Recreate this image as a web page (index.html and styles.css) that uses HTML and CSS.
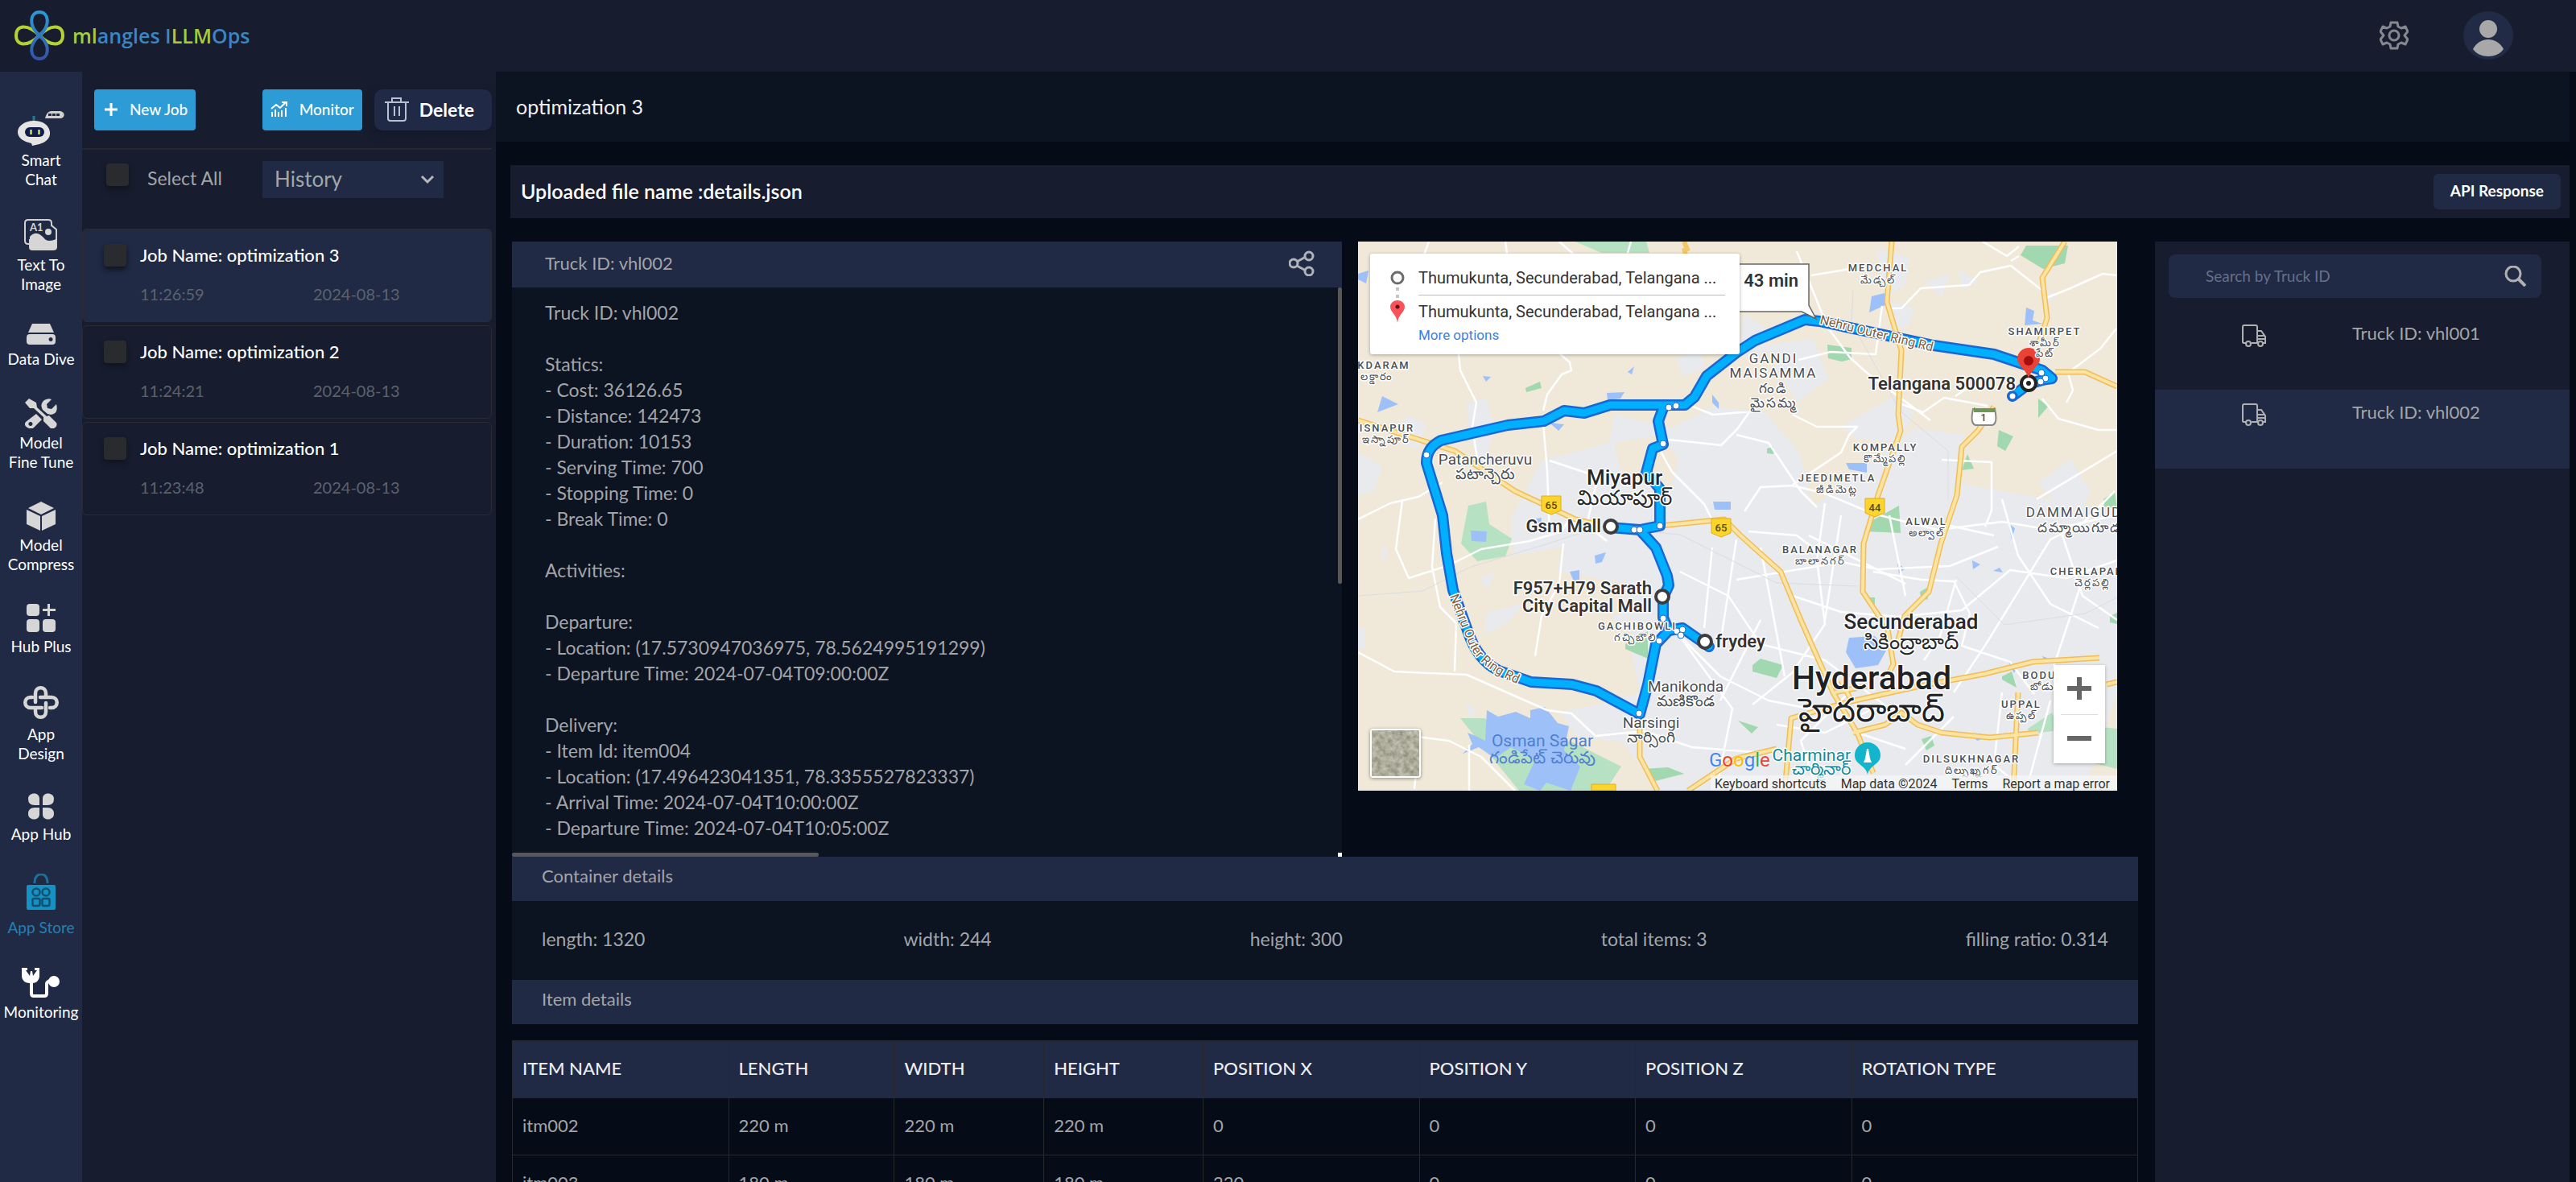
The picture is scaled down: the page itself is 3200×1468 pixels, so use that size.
FILE: index.html
```html
<!DOCTYPE html>
<html lang="en">
  <head>
    <meta charset="UTF-8" />
    <meta name="viewport" content="width=device-width, initial-scale=1.0" />
    <title>mlangles LLMOps - App Store</title>
    <link rel="stylesheet" href="styles.css">
  </head>
  <body>
    <header class="topbar">
      <a class="brand" href="#">
        <svg width="62" height="62" viewBox="0 0 62 62" fill="none" stroke-width="4">
          <defs>
            <linearGradient id="petal" x1="0" y1="0" x2="0" y2="1">
              <stop offset="0" stop-color="#2b9bd8" />
              <stop offset="1" stop-color="#3553a8" />
            </linearGradient>
          </defs>
          <path d="M31 31C16 16 2 18 2 31S16 46 31 31C46 16 60 18 60 31S46 46 31 31z" stroke="#b2d235" />
          <path d="M31 31C16 18 20 2 31 2S46 18 31 31C16 44 20 60 31 60S46 44 31 31z" stroke="url(#petal)" />
        </svg>
        <span class="brand-name"><b>ml</b>angles I<b>LLM</b>Ops</span>
      </a>
      <div class="topbar-actions">
        <button class="icon-btn" aria-label="Settings">
          <svg width="36" height="36" viewBox="0 0 36 36" fill="none" stroke="#85888f" stroke-width="3">
            <path d="M14 2h8l1 5 4 2 5-2 3 6-4 5 4 5-3 6-5-2-4 2-1 5h-8l-1-5-4-2-5 2-3-6 4-5-4-5 3-6 5 2 4-2z" stroke-linejoin="round" />
            <circle cx="18" cy="18" r="6" />
          </svg>
        </button>
        <button class="icon-btn avatar" aria-label="Account">
          <svg width="62" height="60" viewBox="0 0 62 60">
            <ellipse cx="31" cy="30" rx="31" ry="30" fill="#212b45" />
            <circle cx="31" cy="22" r="11" fill="#a8a8a8" />
            <path d="M12 47c8-16 30-16 38 0c-8 12-30 12-38 0z" fill="#a8a8a8" />
          </svg>
        </button>
      </div>
    </header>

    <div class="shell">
      <nav class="rail">
        <a href="#">
          <svg width="60" height="44" viewBox="0 0 60 44">
            <path d="M35 10c2-7 4-9 9-9h9c7 0 8 9 0 9z" fill="#d0d0d0" />
            <path d="M39 4h4v3h-4zM44 4h4v3h-4zM49 4h4v3h-4z" fill="#1d2746" />
            <path d="M21 7v7" stroke="#1c7d93" stroke-width="3" />
            <path d="M21 13c12 0 19 6 20 14s-6 13-13 15l-9 2-1-3C8 39 1 34 1 27s8-14 20-14z" fill="#e4e4e4" />
            <rect x="10" y="21" width="24" height="12" rx="6" fill="#131b48" />
            <path d="M16 24h3v6h-3zM26 24h3v6h-3z" fill="#a9c94a" />
          </svg>
          <span>Smart<br />Chat</span>
        </a>
        <a href="#">
          <svg width="42" height="39" viewBox="0 0 42 39">
            <path d="M8 31H5c-3 0-4-1-4-4V5c0-3 1-4 4-4h25c3 0 4 1 4 4v3l6 5v22c0 2-1 3-4 3H10c-2 0-3-1-3-3V25" fill="none" stroke="#d0d0d0" stroke-width="2" />
            <path d="M7 36V22c7-8 13-3 17 1c5 6 9 4 16 2v10c0 2-1 3-4 3H10c-2 0-3-1-3-2z" fill="#d6d6d6" />
            <circle cx="30" cy="16" r="4" fill="#d6d6d6" />
            <text x="7" y="15" class="ai-mark">A1</text>
          </svg>
          <span>Text To<br />Image</span>
        </a>
        <a href="#">
          <svg width="36" height="26" viewBox="0 0 36 26" fill="#d6d6d6">
            <path d="M7 0h22l5 11H2z" />
            <path fill-rule="evenodd" d="M4 13h28q4 0 4 4v5q0 4-4 4H4q-4 0-4-4v-5q0-4 4-4zM30 17a2.500 2.500 0 1 0 .1 0z" />
          </svg>
          Data Dive
        </a>
        <a href="#">
          <svg width="40" height="37" viewBox="0 0 40 37" fill="#d6d6d6">
            <path d="M0 5 5 0l9 5 1 6 12 11 3-1 9 9q2 4-3 7l-4 0-9-9 0-5L11 12H6z" />
            <path fill-rule="evenodd" d="M14 19 1 29q-3 4 2 7t8 0l10-10zM7 29a2.500 2.500 0 1 1-.1 0z" />
            <path d="M22 14q-4-7 2-12 5-3 9-1l-6 6 1 5 5 1 6-6q3 12-7 13l-4-1z" />
          </svg>
          <span>Model<br />Fine Tune</span>
        </a>
        <a href="#">
          <svg width="36" height="36" viewBox="0 0 36 36" fill="#d6d6d6">
            <path d="M18 0 34 8 18 16 2 8zM0 10l17 8v18L0 28zM36 10l-17 8v18l17-8z" />
          </svg>
          <span>Model<br />Compress</span>
        </a>
        <a href="#">
          <svg width="36" height="35" viewBox="0 0 36 35" fill="#d6d6d6">
            <rect width="16" height="15" rx="4" />
            <rect y="19" width="16" height="16" rx="4" />
            <rect x="20" y="19" width="16" height="16" rx="4" />
            <path d="M26 0h3v6h7v3h-7v6h-3V9h-6V6h6z" />
          </svg>
          Hub Plus
        </a>
        <a href="#">
          <svg width="44" height="42" viewBox="0 0 44 42" fill="none" stroke="#d6d6d6" stroke-width="4.500" stroke-linecap="round">
            <path d="M15 20V9c0-9 13-9 13 0v3M11 14H9c-9 0-9 13 0 13h14M28 21v11c0 9-13 9-13 0v-2M33 27h2c9 0 9-13 0-13H21" />
          </svg>
          <span>App<br />Design</span>
        </a>
        <a href="#">
          <svg width="32" height="33" viewBox="0 0 32 33" fill="#d6d6d6">
            <path d="M14 15V6C13-2 0-1 0 7q0 8 8 8zM18 15V6c1-8 14-7 14 1q0 8-8 8zM14 18v9c-1 8-14 7-14-1q0-8 8-8zM18 18v9c1 8 14 7 14-1q0-8-8-8z" />
          </svg>
          App Hub
        </a>
        <a href="#" class="active">
          <svg width="36" height="45" viewBox="0 0 36 45">
            <path d="M10 12C9-3 27-3 26 12" fill="none" stroke="#1b6f99" stroke-width="3" />
            <rect y="14" width="36" height="31" rx="2" fill="#1591c4" />
            <g fill="none" stroke="#12506f" stroke-width="2.500">
              <circle cx="12" cy="23" r="4.500" /><circle cx="24" cy="23" r="4.500" />
              <rect x="7.500" y="31" width="9" height="9" rx="2" /><rect x="19.500" y="31" width="9" height="9" rx="2" />
            </g>
          </svg>
          App Store
        </a>
        <a href="#">
          <svg width="48" height="38" viewBox="0 0 48 38">
            <path d="M0 1h7v3H5l5 7 1-6h2l1 6 5-7h-3V1h6v11q-1 7-8 8h-5Q1 19 0 12z" fill="#fff" />
            <path d="M12 18v15q0 3 3 3h13q3 0 3-3V21q0-3 5-4" fill="none" stroke="#fff" stroke-width="4" />
            <circle cx="40" cy="18" r="7" fill="#fff" />
          </svg>
          Monitoring
        </a>
      </nav>

      <aside class="jobs">
        <div class="jobs-toolbar">
          <button class="btn btn-primary">
            <svg width="16" height="16" viewBox="0 0 16 16"><path d="M8 0v16M0 8h16" stroke="#fff" stroke-width="3" /></svg>
            New Job
          </button>
          <button class="btn btn-primary monitor">
            <svg width="21" height="19" viewBox="0 0 21 19" fill="none" stroke="#fff" stroke-width="2">
              <path d="M1 9 7 4l5 4 7-7M14 1h6v5M2 19v-6M6 19v-9M10 19v-6M14 19v-8M19 19V8" />
            </svg>
            Monitor
          </button>
          <button class="btn btn-delete">
            <svg width="30" height="31" viewBox="0 0 30 31" fill="none" stroke="#b9c0d0" stroke-width="2">
              <path d="M0 7h30M9 7V2h11v5M4 7v20q0 3 3 3h16q3 0 3-3V7M12 12v12M18 12v12" />
            </svg>
            Delete
          </button>
        </div>
        <div class="jobs-filter">
          <input type="checkbox" class="tick" id="select-all" />
          <label for="select-all">Select All</label>
          <div class="select-wrap">
            <select aria-label="Job list">
              <option>History</option>
            </select>
            <svg width="18" height="12" viewBox="0 0 18 12"><path d="M2 2l7 7 7-7" fill="none" stroke="#b8b8b8" stroke-width="3" /></svg>
          </div>
        </div>
        <ul class="job-list">
          <li class="job selected">
            <input type="checkbox" class="tick" id="job3" />
            <label for="job3">Job Name: optimization 3</label>
            <div class="job-meta"><span>11:26:59</span><span>2024-08-13</span></div>
          </li>
          <li class="job">
            <input type="checkbox" class="tick" id="job2" />
            <label for="job2">Job Name: optimization 2</label>
            <div class="job-meta"><span>11:24:21</span><span>2024-08-13</span></div>
          </li>
          <li class="job">
            <input type="checkbox" class="tick" id="job1" />
            <label for="job1">Job Name: optimization 1</label>
            <div class="job-meta"><span>11:23:48</span><span>2024-08-13</span></div>
          </li>
        </ul>
      </aside>

      <main class="main">
        <h1 class="page-title">optimization 3</h1>
        <div class="file-bar">
          <h2>Uploaded file name :details.json</h2>
          <button class="btn btn-api">API Response</button>
        </div>

        <div class="content">
          <div class="details">
            <div class="overview">
              <section class="truck">
                <div class="section-head">
                  <span>Truck ID: vhl002</span>
                  <button class="icon-btn" aria-label="Share">
                    <svg width="32" height="32" viewBox="0 0 32 32" fill="none" stroke="#b0b3ba" stroke-width="3">
                      <path d="M10 14 21 8M10 19l11 6" />
                      <circle cx="6" cy="16" r="5" /><circle cx="25" cy="7" r="5" /><circle cx="25" cy="26" r="5" />
                    </svg>
                  </button>
                </div>
                <div class="truck-body">
<pre>Truck ID: vhl002

Statics:
- Cost: 36126.65
- Distance: 142473
- Duration: 10153
- Serving Time: 700
- Stopping Time: 0
- Break Time: 0

Activities:

Departure:
- Location: (17.5730947036975, 78.5624995191299)
- Departure Time: 2024-07-04T09:00:00Z

Delivery:
- Item Id: item004
- Location: (17.496423041351, 78.3355527823337)
- Arrival Time: 2024-07-04T10:00:00Z
- Departure Time: 2024-07-04T10:05:00Z</pre>
                  <div class="thumb thumb-y"></div>
                  <div class="thumb thumb-x"></div>
                  <div class="thumb-corner"></div>
                </div>
              </section>

              <section class="map">
                <svg class="map-canvas" viewBox="0 0 943 682">
                  <rect width="943" height="682" fill="#f0e8d8" />
                  <!-- built-up areas -->
                  <g fill="#e8eaed">
                    <path d="M190 345 228 272 312 250 318 215 390 232 440 205 505 212 548 262 565 330 690 232 752 240 745 300 845 318 943 335V560l-40 122H372l-42-60-60-8-18-30 60-12 38-12-12-60-34-50-58-30 8-40-62 10z" />
                    <path d="M135 200l25-6 8 40-12 50-18-40zM395 145l28-10 10 22-30 10zM0 262l30 18-10 30-20 5zM60 215l25 12-10 30-25-6zM480 90l30 20-8 40-30-10zM645 10l40 10-6 35-25 15zM660 75l32 8-8 22-24 6zM705 50l30-10-10 30zM745 35l26 14-20 12zM845 60l24 5-10 12zM600 230l70-40 20 25-20 35-50-5zM505 130l60-10 20 50-40 30zM845 300l40-30 25 40-20 40zM160 460l45-10-20 25-28 12zM80 90l60 12-40 40zM150 420l20-10-8 20zM30 375l8 12-8 12z" />
                    <path d="M0 480h8v25H0zM133 570l14 14-8 8z" />
                  </g>
                  <path d="M318 250l60-10 20 30-10 40-60-20zM225 405l110 20-10 40-110-15zM250 480l90-10 0 90-100-8z" fill="#f0e8d8" />
                  <!-- parks -->
                  <g fill="#b7e1c3">
                    <path d="M270 0h88l4 14h-60zM137 328l22-5 4 28 28 18-8 22-35 6-20-22zM127 592l30 0 40 20 70 10 60 30-20 30H200zM832 605l30-20 8 22-36 5zM895 600l48 5v50l-40-10z" />
                  </g>
                  <g fill="#a1d8af">
                    <path d="M208 182l18-8 2 8-19 5zM830 5h52l-4 22-27 7-28-17zM583 128l30 4v14l-12 3-17-4zM796 234l18 8-10 18-10-6zM845 195l12 10-12 14zM757 264l8 18-15 2zM636 348l36-20 2 34-42-2zM332 500l28-16 0 34-28-12zM490 526l10-8 28 8-8 16-30-8zM634 442h8v8l-9 1zM698 435l14-8-5 18-8-3zM800 540l12-6 6 20-18-10zM700 618l12-4 4 12-10 6zM926 320l14-10 3 22-16-3zM934 465l9-4v14l-9-2zM355 655l30-2 20 8-40 10zM472 595l25 8-8 8zM508 257l8-2v9l-8-1z" />
                  </g>
                  <!-- water -->
                  <g fill="#9ec0f9">
                    <path d="M160 582l14 8 22-6 18 8 0-10 18-4 16 20 14 4-6 30 20 20-12 30-30-10-8 10-20-8 14-30-30-16-20 14-20-14-20 8 12-12-6-14 10 4 12 6z" />
                    <path d="M610 492l32-2 14 18-10 18-28 4-12-20zM638 68l16-4 3 14-22 10zM30 192l20 10-26 10zM0 40l13-4-3 16-10-5zM140 359l20 1-1 13-18-1zM263 410l12-2v12l-7 2zM309 188l22-1-5 8-16 2zM238 225l18 2-7 8zM294 390l14-4-5 12-8 2zM606 275h26v12l-22-4zM830 82l10 4-2 12 12 4-22 2zM441 323l22 0 0 10-20 0zM155 167l10 1-6 6zM335 162l8-7-3 10zM440 190l8 10 0 8-8-8zM218 345l10-2-2 14zM670 400l10 6-8 6zM789 409l8-4 4 6zM763 396l10 5-9 6zM808 350l8 6-4 14zM808 522l12 4-5 10zM850 515l6 2-3 4zM763 613l10-2 4 6-8 3zM630 500l20 4z" />
                  </g>
                  <!-- minor roads -->
                  <g fill="none" stroke="#fff" stroke-width="2.500" stroke-linejoin="round">
                    <path d="M80 22 88 0M186 22l-3-22M250 0l18 16M335 14l4-14M125 140l2 20 20 40-5 30 6 40M230 210l5-20 18-25 12-5-2-10-14-12M0 345l40-20 35-8 30-18M55 322l-8 60 16 36 50-16 40-20 60-10 40-12 6-10 20-2 30 24M0 510l45 24 90 4 100 44 30 4 30 28 60-6 60 20 100 8M120 534l2-60-20-20-10-50 4-60M220 515l8-50 22-40 5-50M230 225l5 60 3 80M238 272l60 20-14 60M370 250l20 36 40 40 20 40M375 245l40 4 36 4 20-20 20-28M411 203l30 12 60-5M545 12l8 20 14 34 16 40 28 38 20 18 80 60M563 42l60-10M660 83l15 0 24-25 60-4 14-16 38-8 38 30M776 0l30 18 15-12M811 24l10-6M547 147l40-10 56 3 8-60M676 202l26 10 26-18 54 10M540 215l30 15 50 0-10 10-10 22-60 40M470 240l40 10 40 60 20 20M850 195l20 25 50 14 23 0M855 70l30-12 40-18 18 2M880 200l8-15-6-22 40-30 20-25M725 271l62 3 0 60-8 20M480 335l20-30 40-2 40 10 60 25 80 20 80-10 60 10 90-20M485 360l60 5 40 30 60 12 90-4 60-24M580 325l-10 70 10 80-40 60-50 40M640 410l60 10 40 2 20 40-10 40 60 20 30 40M743 420l-20 70-20 30M540 440l60 20 70 6 80-8 60-50 70 10 63-22M740 560l40-60 80-130 40-20 40-40M870 350l30 90 43 30M800 320l20 70 40 60 60 30M400 410l60 30 40 60 80 20 80 60M400 490l50 50 60 30 60 12M385 470l80 110-20 100M520 600l60 10 60-30M440 380l-10 100M470 370l-20 130M610 560l-60 60 20 60M740 590l-60 60M800 560l-10 90 40 32M860 570l-30 112M73 615l40 5 40 20 42 42M70 680l2-20M138 625v57M500 470l-50 100M760 180l-18 12" />
                    <path d="M843 320l100-60M600 340l-20 130M660 340l20 100M700 345l90 20M560 365l120 60M900 420l-40 120M620 610l60 20M470 420l120-20M500 380l30 160" />
                  </g>
                  <g fill="none" stroke="#dadce0" stroke-width="1">
                    <path d="M0 440l80-6 60-30 100-30 60-20 100 10 120 60 100 4M615 60l-2 40 60 110 60 50 0 60M943 442l-40 20-100 14-60-60" />
                  </g>
                  <!-- highways -->
                  <g fill="none" stroke="#f0bd57" stroke-width="7" stroke-linejoin="round">
                    <path id="hw" d="M0 222 120 260 195 310 270 345 300 352M375 353l80-8 20 20 50 45 25 60 40 90 30 50 20 50M663 0l-6 75 18 60-4 80 3 20-28 80-18 60-1 60 20 30 10 10 8 50-10 20M878 0l-28 45 6 50-10 30M866 162l37 0 40 18M790 205l-20 30-20 20-6 60-20 60-15 60-30 30-8 30M350 600l0 40 22 42M530 682l8-90 70-20 90-20 80-15 60-15 83-5M930 550l13-3M615 610l40-10 20-15 20 15 30 10 60 6 60-6M820 560l-6 122M410 682l60-40 50-12M592 560l40-8M600 545l12 24" />
                    <use href="#hw" stroke="#fbe3a2" stroke-width="4" />
                  </g>
                  <path d="M405 8l4 18M405 0l5 12" stroke="#f4c867" stroke-width="6" />
                  <!-- route -->
                  <g fill="none" stroke="#1967d2" stroke-width="14" stroke-linejoin="round" stroke-linecap="round">
                    <path id="route" d="M813 192 833 177 850 172 862 170 850 160 790 140 715 129 573 99 555 97 493 123 470 138 433 167 418 193 406 203 313 203 281 213 256 210 231 223 186 228 103 247Q85 256 85 275L105 340 110 387 118 433 136 483Q148 520 175 533L215 547 266 550 296 558 350 587 360 550 370 500 386 483 403 480 436 503M386 483 379 467V442L386 427 384 415 370 380 350 358 313 355M350 358 375 353V307L358 287 366 257 379 252 373 223 380 204" />
                    <use href="#route" stroke="#00b0ff" stroke-width="9" />
                  </g>
                  <g fill="#fff" stroke="#1967d2" stroke-width="1">
                    <circle cx="85" cy="265" r="4" /><circle cx="379" cy="251" r="4" /><circle cx="386" cy="206" r="4" /><circle cx="395" cy="204" r="4" />
                    <circle cx="343" cy="358" r="4" /><circle cx="350" cy="358" r="4" /><circle cx="375" cy="353" r="4" /><circle cx="379" cy="468" r="4" />
                    <circle cx="374" cy="496" r="4" /><circle cx="396" cy="484" r="4" /><circle cx="403" cy="482" r="4" /><circle cx="401" cy="489" r="4" />
                    <circle cx="349" cy="586" r="4" /><circle cx="849" cy="163" r="4" /><circle cx="854" cy="170" r="4" /><circle cx="848" cy="174" r="4" />
                    <circle cx="813" cy="192" r="5" stroke-width="3" />
                  </g>
                  <g fill="#fff" stroke="#3c3c3c" stroke-width="4">
                    <circle cx="314" cy="354" r="8" /><circle cx="378" cy="441" r="8" /><circle cx="431" cy="497" r="8" />
                    <circle cx="833" cy="176" r="9" stroke="#222" />
                  </g>
                  <circle cx="833" cy="176" r="3" fill="#222" />
                  <path d="M833 170c-2-10-14-16-14-24a14 14 0 0 1 28 0c0 8-12 14-14 24z" fill="#ea4335" />
                  <circle cx="833" cy="148" r="6" fill="#a50e0e" />
                  <!-- travel time callout -->
                  <path d="M440 28h120v51l9 17-18-9H440z" fill="#fff" stroke="#666" stroke-width="1.500" />
                  <!-- road shields -->
                  <g class="shield">
                    <path d="M228 316h24v18l-12 5-12-5zM439 344h24v18l-12 5-12-5zM630 319h24v18l-12 5-12-5zM290 674h30v8h-30z" fill="#fbd52c" stroke="#e0ae1c" />
                    <text x="240" y="332">65</text><text x="451" y="360">65</text><text x="642" y="335">44</text>
                    <path d="M764 208h27q4 18-3 20h-21q-7-2-3-20z" fill="#fff" stroke="#888" stroke-width="2" />
                    <path d="M765 206l7 3 6-2 6 2 7-3v6h-26z" fill="#6a9a4f" />
                    <text x="777" y="223">1</text>
                  </g>
                  <!-- places -->
                  <g class="place caps">
                    <text x="646" y="37">MEDCHAL</text><text x="646" y="52">మేడ్చల్</text>
                    <text x="853" y="116">SHAMIRPET</text><text x="853" y="130">శామీర్</text><text x="853" y="143">పేట్</text>
                    <text x="32" y="158">KDARAM</text><text x="23" y="172">లక్డారం</text>
                    <text x="36" y="236">ISNAPUR</text><text x="35" y="250">ఇస్నాపూర్</text>
                    <text x="655" y="260">KOMPALLY</text><text x="655" y="274">కొమ్మేపల్లి</text>
                    <text x="595" y="298">JEEDIMETLA</text><text x="595" y="312">జీడిమెట్ల</text>
                    <text x="706" y="352">ALWAL</text><text x="706" y="366">అల్వాల్</text>
                    <text x="574" y="387">BALANAGAR</text><text x="574" y="401">బాలానగర్</text>
                    <text x="912" y="414">CHERLAPALLI</text><text x="912" y="428">చెర్లపల్లి</text>
                    <text x="347" y="482">GACHIBOWLI</text><text x="345" y="496">గచ్చిబౌలి</text>
                    <text x="866" y="543">BODUPPAL</text><text x="863" y="557">బోడుప్పల్</text>
                    <text x="824" y="579">UPPAL</text><text x="824" y="593">ఉప్పల్</text>
                    <text x="762" y="647">DILSUKHNAGAR</text><text x="762" y="661">దిల్సుఖ్నగర్</text>
                  </g>
                  <g class="place suburb">
                    <text x="516" y="151">GANDI</text><text x="516" y="169">MAISAMMA</text><text x="516" y="188">గండి</text><text x="516" y="206">మైసమ్మ</text>
                    <text x="896" y="342">DAMMAIGUDA</text><text x="896" y="361">దమ్మాయిగూడ</text>
                  </g>
                  <g class="place town">
                    <text x="158" y="277">Patancheruvu</text><text x="158" y="295">పటాన్చెరు</text>
                    <text x="407" y="559">Manikonda</text><text x="407" y="577">మణికొండ</text>
                    <text x="364" y="604">Narsingi</text><text x="364" y="622">నార్సింగి</text>
                  </g>
                  <g class="place city">
                    <text x="331" y="302">Miyapur</text><text x="331" y="327">మియాపూర్</text>
                    <text x="687" y="481">Secunderabad</text><text x="687" y="506">సికింద్రాబాద్</text>
                  </g>
                  <g class="place metro">
                    <text x="638" y="556">Hyderabad</text><text x="638" y="596">హైదరాబాద్</text>
                  </g>
                  <g class="place water">
                    <text x="229" y="627">Osman Sagar</text><text x="229" y="648">గండిపేట్ చెరువు</text>
                  </g>
                  <g class="place sight">
                    <text x="612" y="645">Charminar</text><text x="612" y="662">చార్మినార్</text>
                  </g>
                  <path d="M633 662c-2-12-16-12-16-24a16 16 0 0 1 32 0c0 12-14 12-16 24z" fill="#12b5cb" />
                  <path d="M628 647h10l-2-5-2-12h-2l-2 12z" fill="#fff" />
                  <g class="place stop">
                    <text x="817" y="184">Telangana 500078</text>
                    <text x="302" y="361">Gsm Mall</text>
                    <text x="365" y="438">F957+H79 Sarath</text>
                    <text x="365" y="460">City Capital Mall</text>
                    <text x="506" y="504">frydey</text>
                    <text x="547" y="56">43 min</text>
                  </g>
                  <path id="ring-n" d="M573 102 715 137" fill="none" />
                  <path id="ring-w" d="M114 440Q128 478 140 505 152 530 200 550" fill="none" />
                  <g class="place road">
                    <text><textPath href="#ring-n">Nehru Outer Ring Rd</textPath></text>
                    <text><textPath href="#ring-w">Nehru Outer Ring Rd</textPath></text>
                  </g>
                </svg>
                <div class="directions">
                  <svg width="18" height="68" viewBox="0 0 18 68">
                    <circle cx="9" cy="11" r="7" fill="none" stroke="#6b6b6b" stroke-width="3" />
                    <path d="M9 23v14" stroke="#c4c4c4" stroke-width="4" stroke-dasharray="4 5" />
                    <path d="M9 67C8 56 0 54 0 47a9 8 0 0 1 18 0c0 7-8 9-9 20z" fill="#fb5158" />
                    <circle cx="9" cy="47" r="2.500" fill="#5a1216" />
                  </svg>
                  <div class="directions-list">
                    <div>Thumukunta, Secunderabad, Telangana ...</div>
                    <div>Thumukunta, Secunderabad, Telangana ...</div>
                    <a href="#">More options</a>
                  </div>
                </div>
                <button class="satellite" aria-label="Show satellite imagery">
                  <svg width="59" height="57" viewBox="0 0 59 57">
                    <filter id="terrain">
                      <feTurbulence type="fractalNoise" baseFrequency="0.15" numOctaves="4" seed="7" />
                      <feColorMatrix values="0.5 0 0 0 0.17  0.5 0 0 0 0.16  0.5 0 0 0 0.08  0 0 0 0 1" />
                    </filter>
                    <rect width="59" height="57" filter="url(#terrain)" />
                  </svg>
                </button>
                <div class="zoom-ctl">
                  <button aria-label="Zoom in"><svg width="30" height="28" viewBox="0 0 30 28"><path d="M15 0v28M0 14h30" stroke="#666" stroke-width="6" /></svg></button>
                  <button aria-label="Zoom out"><svg width="30" height="28" viewBox="0 0 30 28"><path d="M0 14h30" stroke="#666" stroke-width="6" /></svg></button>
                </div>
                <div class="google"><i>G</i><i>o</i><i>o</i><i>g</i><i>l</i><i>e</i></div>
                <div class="credits">
                  <span>Keyboard shortcuts</span><span>Map data ©2024</span><a href="#">Terms</a><a href="#">Report a map error</a>
                </div>
              </section>
            </div>

            <h3 class="section-head">Container details</h3>
            <div class="container-info">
              <span>length: 1320</span>
              <span>width: 244</span>
              <span>height: 300</span>
              <span>total items: 3</span>
              <span>filling ratio: 0.314</span>
            </div>
            <h3 class="section-head">Item details</h3>
            <table class="items">
              <colgroup>
                <col class="c-name" /><col class="c-len" /><col class="c-wid" /><col class="c-hgt" /><col class="c-pos" /><col class="c-pos" /><col class="c-pos" /><col />
              </colgroup>
              <thead>
                <tr>
                  <th>ITEM NAME</th><th>LENGTH</th><th>WIDTH</th><th>HEIGHT</th><th>POSITION X</th><th>POSITION Y</th><th>POSITION Z</th><th>ROTATION TYPE</th>
                </tr>
              </thead>
              <tbody>
                <tr><td>itm002</td><td>220 m</td><td>220 m</td><td>220 m</td><td>0</td><td>0</td><td>0</td><td>0</td></tr>
                <tr><td>itm003</td><td>180 m</td><td>180 m</td><td>180 m</td><td>220</td><td>0</td><td>0</td><td>0</td></tr>
              </tbody>
            </table>
          </div>

          <aside class="trucks">
            <div class="search">
              <input type="text" placeholder="Search by Truck ID" aria-label="Search by Truck ID" />
              <svg width="27" height="26" viewBox="0 0 27 26" fill="none" stroke="#b0b0b0" stroke-width="3">
                <circle cx="11" cy="10" r="9" /><path d="M17 16l9 9" stroke-width="4" />
              </svg>
            </div>
            <a class="truck-row" href="#">
              <svg width="30" height="28" viewBox="0 0 30 28" fill="none" stroke="#b0b0b0" stroke-width="2">
                <path d="M5 23H2q-1 0-1-1V3q0-2 2-2h14q2 0 2 2v20h-7M19 8h5l5 7v8h-3M19 14h9M19 18h10" />
                <circle cx="8" cy="24" r="3" /><circle cx="23" cy="24" r="3" />
              </svg>
              Truck ID: vhl001
            </a>
            <a class="truck-row selected" href="#">
              <svg width="30" height="28" viewBox="0 0 30 28" fill="none" stroke="#b0b0b0" stroke-width="2">
                <path d="M5 23H2q-1 0-1-1V3q0-2 2-2h14q2 0 2 2v20h-7M19 8h5l5 7v8h-3M19 14h9M19 18h10" />
                <circle cx="8" cy="24" r="3" /><circle cx="23" cy="24" r="3" />
              </svg>
              Truck ID: vhl002
            </a>
          </aside>
        </div>
      </main>
    </div>
  </body>
</html>
```
FILE: styles.css
```css
* {
  box-sizing: border-box;
}
body {
  margin: 0;
  height: 100vh;
  display: flex;
  flex-direction: column;
  overflow: hidden;
  background: #050c17;
  color: #a3a5a9;
  font-family: Lato, "Open Sans", sans-serif;
  font-size: 22px;
  line-height: 32px;
}
h1,
h2,
h3,
ul,
pre {
  margin: 0;
  padding: 0;
  font: inherit;
}
ul {
  list-style: none;
}
a {
  color: inherit;
  text-decoration: none;
}
svg {
  display: block;
  flex: none;
}
button,
input,
select {
  font: inherit;
  color: inherit;
  border: 0;
  margin: 0;
}
button {
  cursor: pointer;
}
.icon-btn {
  background: none;
  padding: 0;
}

/* top bar */
.topbar {
  height: 89px;
  flex: none;
  display: flex;
  justify-content: space-between;
  align-items: center;
  padding: 0 78px 2px 18px;
  background: #171d2e;
}
.brand {
  display: flex;
  align-items: center;
  gap: 10px;
}
.brand-name {
  font-family: "Open Sans", sans-serif;
  font-size: 25px;
  font-weight: 600;
  color: #3a85c4;
}
.brand-name b {
  font-weight: 600;
  color: #a8cb3a;
}
.topbar-actions {
  display: flex;
  align-items: center;
  gap: 68px;
}

/* left icon rail */
.shell {
  flex: 1;
  min-height: 0;
  display: flex;
}
.rail {
  width: 102px;
  flex: none;
  padding-top: 48px;
  background: #202a45;
}
.rail a {
  display: flex;
  flex-direction: column;
  align-items: center;
  gap: 6px;
  margin-bottom: 37px;
  color: #fff;
  font-size: 19px;
  line-height: 24px;
  text-align: center;
}
.rail a.active {
  gap: 10px;
  color: #2580b0;
}
.ai-mark {
  font-size: 13px;
  font-weight: bold;
  fill: #d6d6d6;
}

/* jobs */
.jobs {
  width: 514px;
  flex: none;
  padding-right: 5px;
  background: #171d2e;
}
.jobs-toolbar {
  display: flex;
  gap: 15px;
  padding: 22px 0 22px 15px;
  border-bottom: 2px solid #25282f;
}
.btn {
  display: flex;
  align-items: center;
  height: 51px;
  padding-bottom: 2px;
  border-radius: 4px;
  color: #fff;
  font-size: 19px;
  font-weight: 500;
}
.btn-primary {
  gap: 15px;
  padding: 0 10px 2px 13px;
  background: #2d9cd6;
}
.monitor {
  margin-left: auto;
  padding-left: 10px;
}
.btn-delete {
  gap: 13px;
  padding: 0 22px 2px 13px;
  border-radius: 10px;
  background: #202945;
  font-size: 23px;
  font-weight: bold;
  box-shadow: 0 6px 12px #14192a;
}
.jobs-filter {
  display: flex;
  align-items: center;
  padding: 14px 60px 38px 30px;
}
.jobs-filter label {
  margin: 0 auto 5px 23px;
  font-size: 23px;
}
.tick {
  appearance: none;
  width: 28px;
  height: 28px;
  flex: none;
  border-radius: 4px;
  background: #2a2b2f;
  box-shadow: 0 4px 6px #10141f;
}
.jobs-filter .tick {
  margin-bottom: 12px;
}
.select-wrap {
  position: relative;
}
.select-wrap select {
  appearance: none;
  width: 225px;
  height: 46px;
  padding: 0 15px 2px;
  background: #202a45;
  font-size: 26px;
}
.select-wrap svg {
  position: absolute;
  right: 11px;
  top: 17px;
  pointer-events: none;
}
.job-list {
  display: grid;
  gap: 4px;
}
.job {
  display: grid;
  grid-template-columns: 28px 1fr;
  column-gap: 17px;
  row-gap: 16px;
  align-items: center;
  height: 116px;
  align-content: start;
  padding: 16px 25px 0 26px;
  border: 1px solid #2a2c32;
  border-radius: 6px;
}
.job.selected {
  background: #202a45;
}
.job label {
  color: #fff;
  font-weight: 500;
}
.job-meta {
  grid-column: 2;
  display: grid;
  grid-template-columns: 215px 1fr;
  color: #5c626e;
  font-size: 20px;
}

/* main */
.main {
  flex: 1;
  min-width: 0;
  display: flex;
  flex-direction: column;
  padding-right: 8px;
}
.page-title {
  padding: 27px 25px 28px;
  background: #0c1321;
  color: #f0f0f0;
  font-size: 25px;
}
.file-bar {
  display: flex;
  justify-content: space-between;
  align-items: center;
  margin: 29px 0 29px 18px;
  padding: 11px 11px 11px 13px;
  background: #171d2e;
  color: #fff;
}
.file-bar h2 {
  padding-bottom: 2px;
  font-size: 25px;
  font-weight: 600;
}
.btn-api {
  height: 44px;
  padding: 0 21px 2px;
  border-radius: 6px;
  background: #202a45;
  font-weight: bold;
}
.content {
  flex: 1;
  min-height: 0;
  display: grid;
  grid-template-columns: 2020fr 515fr;
  grid-template-rows: 100%;
  gap: 21px;
  margin-left: 20px;
}
.overview {
  display: grid;
  grid-template-columns: 1031fr 943fr;
  gap: 20px;
  align-items: start;
  padding-right: 26px;
}
.section-head {
  display: flex;
  justify-content: space-between;
  align-items: center;
  padding: 8px 36px 15px 37px;
  background: #202a45;
}
.truck .section-head {
  padding: 11px 34px 14px 41px;
}
.truck-body {
  position: relative;
  padding: 15px 41px 20px;
  background: #0c1321;
  font-size: 23px;
}
.thumb {
  position: absolute;
  border-radius: 2px;
  background: #585858;
}
.thumb-y {
  top: 0;
  right: 0;
  width: 5px;
  height: 52%;
}
.thumb-x {
  left: 0;
  bottom: 0;
  width: 37%;
  height: 5px;
}
.thumb-corner {
  position: absolute;
  right: 0;
  bottom: 0;
  width: 5px;
  height: 5px;
  background: #fff;
}
.container-info {
  display: flex;
  justify-content: space-between;
  padding: 31px 37px 35px;
  background: #0c1321;
  font-size: 23px;
}
.items {
  width: 100%;
  margin-top: 20px;
  border-collapse: collapse;
  table-layout: fixed;
}
.items th,
.items td {
  height: 71px;
  padding: 0 12px 2px;
  border: 1px solid #25282d;
  text-align: left;
  font-weight: 400;
}
.items th {
  background: #202a45;
  color: #eceef2;
  font-weight: 500;
}
.c-name {
  width: 13.3%;
}
.c-len {
  width: 10.2%;
}
.c-wid {
  width: 9.2%;
}
.c-hgt {
  width: 9.8%;
}
.c-pos {
  width: 13.3%;
}

/* map */
.map {
  position: relative;
  overflow: hidden;
  color: #333;
  font-family: Roboto, sans-serif;
}
.map-canvas {
  width: 100%;
  height: auto;
}
.place {
  fill: #4a4e54;
  stroke: #fff;
  stroke-width: 3px;
  stroke-linejoin: round;
  paint-order: stroke;
  text-anchor: middle;
}
.caps {
  font-size: 13px;
  font-weight: 500;
  letter-spacing: 2px;
}
.suburb {
  font-size: 17px;
  letter-spacing: 2px;
}
.town {
  font-size: 19px;
}
.city {
  font-size: 26px;
  font-weight: 500;
  fill: #26282b;
}
.metro {
  font-size: 41px;
  font-weight: 500;
  fill: #202124;
}
.water {
  font-size: 21px;
  fill: #4f7fd0;
  stroke: none;
}
.sight {
  font-size: 21px;
  fill: #12899a;
  text-anchor: end;
}
.stop {
  font-size: 22px;
  font-weight: 600;
  fill: #333;
  text-anchor: end;
}
.road {
  font-size: 16px;
  fill: #806040;
  text-anchor: start;
}
.shield {
  font-size: 13px;
  font-weight: 500;
  fill: #5a4a10;
  text-anchor: middle;
}
.directions {
  position: absolute;
  left: 15px;
  top: 15px;
  display: flex;
  gap: 17px;
  padding: 19px 18px 13px 25px;
  background: #fff;
  border-radius: 3px;
  box-shadow: 0 1px 4px rgba(0, 0, 0, 0.3);
  white-space: nowrap;
}
.directions-list {
  width: 381px;
  font-size: 20px;
  line-height: 22px;
}
.directions-list div + div {
  margin: 10px 0 7px;
  padding-top: 9px;
  border-top: 1px solid #bbb;
}
.directions-list a {
  display: block;
  color: #3a80e0;
  font-size: 17px;
}
.satellite {
  position: absolute;
  left: 15px;
  bottom: 16px;
  width: 63px;
  height: 61px;
  padding: 0;
  overflow: hidden;
  border: 2px solid #fff;
  border-radius: 4px;
  background: #6b6a58;
  box-shadow: 0 1px 4px rgba(0, 0, 0, 0.4);
}
.zoom-ctl {
  position: absolute;
  right: 15px;
  bottom: 34px;
  width: 64px;
  background: #fff;
  box-shadow: 0 1px 4px rgba(0, 0, 0, 0.3);
}
.zoom-ctl button {
  display: flex;
  align-items: center;
  justify-content: center;
  width: 46px;
  height: 61px;
  margin: 0 auto;
  padding: 0 0 3px;
  background: none;
}
.zoom-ctl button + button {
  border-top: 1px solid #ddd;
}
.google {
  position: absolute;
  left: 436px;
  bottom: 22px;
  font-size: 24px;
  color: #4285f4;
  text-shadow: 0 0 2px #fff;
}
.google i {
  font-style: normal;
}
.google i:nth-child(2),
.google i:nth-child(6) {
  color: #ea4335;
}
.google i:nth-child(3) {
  color: #fbbc05;
}
.google i:nth-child(5) {
  color: #34a853;
}
.credits {
  position: absolute;
  right: 0;
  bottom: 0;
  display: flex;
  gap: 18px;
  padding: 3px 9px 0 5px;
  background: rgba(245, 245, 245, 0.75);
  font-size: 16px;
  line-height: 16px;
}

/* truck list */
.trucks {
  background: #171d2e;
}
.search {
  display: flex;
  align-items: center;
  height: 54px;
  margin: 16px 35px 16px 17px;
  padding-right: 19px;
  border-radius: 8px;
  background: #202a45;
}
.search input {
  flex: 1;
  padding: 0 0 0 46px;
  background: none;
  font-size: 19px;
}
.search input::placeholder {
  color: #65708a;
  opacity: 1;
}
.truck-row {
  display: flex;
  align-items: start;
  gap: 107px;
  height: 98px;
  padding: 12px 108px;
}
.truck-row svg {
  margin-top: 5px;
}
.truck-row.selected {
  background: #202a45;
}
```
